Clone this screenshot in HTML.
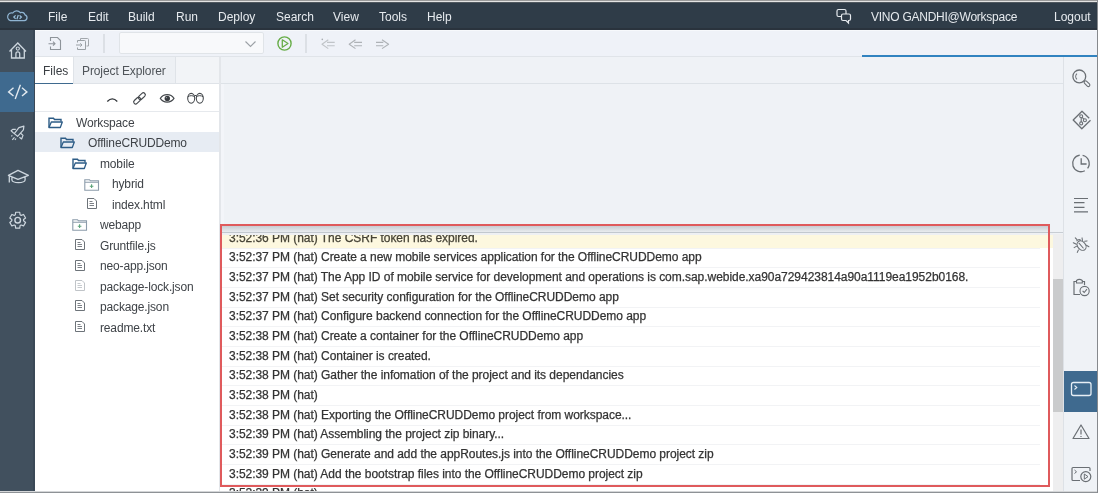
<!DOCTYPE html>
<html><head><meta charset="utf-8">
<style>
*{box-sizing:border-box;margin:0;padding:0}
html,body{width:1098px;height:493px;overflow:hidden;background:#fff;font-family:"Liberation Sans",sans-serif;}
.a{position:absolute}
svg{position:absolute;overflow:visible}
.mi{will-change:transform;top:10px;font-size:12px;color:#e6eaee;white-space:nowrap;line-height:14px}
.tt{will-change:transform;font-size:12px;color:#32363a;white-space:nowrap;line-height:14px}
.ln{will-change:transform;letter-spacing:-0.04px;-webkit-text-stroke:0.25px #333;left:6px;font-size:12px;color:#333;white-space:nowrap;line-height:14px}
</style></head><body>

<div class="a" style="left:0px;top:0px;width:1098px;height:30px;background:#2f3c48;"></div>
<div class="a" style="left:0px;top:28px;width:1098px;height:2px;background:#2a333d;"></div>
<div class="a" style="left:0px;top:0px;width:1098px;height:1px;background:#9a9a9a;"></div>
<div class="a" style="left:0px;top:1px;width:1098px;height:1px;background:#e4e4e4;"></div>
<div class="a" style="left:0px;top:2px;width:1098px;height:1px;background:#50585f;"></div>
<svg style="left:0;top:0" width="36" height="30" viewBox="0 0 36 30">
<path transform="translate(17.5 15.6) scale(0.9) translate(-17.3 -15.5)" d="M9.5 21 H25 A3.3 3.3 0 0 0 25.6 14.6 A3.6 3.6 0 0 0 20.5 12.2 A5.2 5.2 0 0 0 12 12.6 A3.8 3.8 0 0 0 9.5 21 Z" fill="none" stroke="#8fb4d2" stroke-width="1.4"/>
<path d="M15.6 15.4 L13.8 17.1 L15.6 18.8 M19.6 15.4 L21.4 17.1 L19.6 18.8 M18.3 15 L16.9 19.2" fill="none" stroke="#9cc3e0" stroke-width="1.2"/>
</svg>
<div class="a mi" style="left:48px">File</div>
<div class="a mi" style="left:88px">Edit</div>
<div class="a mi" style="left:128px">Build</div>
<div class="a mi" style="left:176px">Run</div>
<div class="a mi" style="left:218px">Deploy</div>
<div class="a mi" style="left:276px">Search</div>
<div class="a mi" style="left:333px">View</div>
<div class="a mi" style="left:379px">Tools</div>
<div class="a mi" style="left:427px">Help</div>
<svg style="left:830px;top:4px" width="30" height="22" viewBox="0 0 30 22">
<path d="M8.5 5.5 H14.5 Q16 5.5 16 7 V11 Q16 12.5 14.5 12.5 H8.5 Q7 12.5 7 11 V7 Q7 5.5 8.5 5.5 Z" fill="none" stroke="#e6eaee" stroke-width="1.2"/>
<path d="M13 10 H19 Q20.5 10 20.5 11.5 V15 Q20.5 16.5 19 16.5 H18.5 V19 L16 16.5 H13 Q11.5 16.5 11.5 15 V11.5 Q11.5 10 13 10 Z" fill="#2f3c48" stroke="#e6eaee" stroke-width="1.2"/>
</svg>
<div class="a mi" style="left:871px;letter-spacing:-0.25px">VINO GANDHI@Workspace</div>
<div class="a mi" style="left:1054px">Logout</div>
<div class="a" style="left:0px;top:30px;width:35px;height:463px;background:#41505e;"></div>
<div class="a" style="left:33px;top:30px;width:2px;height:463px;background:#3a4856;"></div>
<div class="a" style="left:0px;top:72px;width:34px;height:40px;background:#3f6a8f;"></div>
<svg style="left:0;top:30px" width="35" height="200" viewBox="0 30 35 200">
<path d="M9.5 51.5 L17.8 43 L26 51.5 M11.5 50 V58 H24.3 V50 M15.9 58 V53.8 A1.9 1.9 0 0 1 19.7 53.8 V58" fill="none" stroke="#cdd6de" stroke-width="1.3"/>
<circle cx="17.8" cy="48.6" r="1.6" fill="none" stroke="#cdd6de" stroke-width="1.1"/>
<path d="M13.5 87.8 L8.6 91.9 L13.5 96 M22 87.8 L26.9 91.9 L22 96 M20.4 84.8 L15.2 99" fill="none" stroke="#e2e9ef" stroke-width="1.4"/>
<path d="M23.9 126.2 L18.9 127.6 L14.3 133.6 L17.6 136.3 L23.4 129.8 Z M15.8 129.4 H12.7 L11.1 130.7 L13.9 133.4 M20.7 133.2 L23 135.4 L21.6 139 L19.4 137.2 M11.4 136.3 L12.3 135.4 M12.3 139.9 L14.5 137.4 M14.9 139.9 L16 138.5" fill="none" stroke="#cdd6de" stroke-width="1.2" stroke-linejoin="round"/>
<path d="M8.4 175.3 L18 170.3 L28.4 175.3 L18 179.3 Z M11.9 177 V180 C12.5 183.5 24.5 183.5 25.1 180 V177 M9.3 175.6 V182.5" fill="none" stroke="#cdd6de" stroke-width="1.3" stroke-linejoin="round"/>
</svg>
<svg style="left:0;top:0" width="35" height="240" viewBox="0 0 35 240"><path d="M15.29 214.81 L15.67 212.25 L19.73 212.25 L20.11 214.81 L21.16 215.42 L23.57 214.47 L25.59 217.98 L23.57 219.59 L23.57 220.81 L25.59 222.42 L23.57 225.93 L21.16 224.98 L20.11 225.59 L19.73 228.15 L15.67 228.15 L15.29 225.59 L14.24 224.98 L11.83 225.93 L9.81 222.42 L11.83 220.81 L11.83 219.59 L9.81 217.98 L11.83 214.47 L14.24 215.42 Z" fill="none" stroke="#cdd6de" stroke-width="1.2" stroke-linejoin="round"/><circle cx="17.7" cy="220.2" r="2.8" fill="none" stroke="#cdd6de" stroke-width="1.4"/></svg>
<div class="a" style="left:35px;top:30px;width:1063px;height:27px;background:#eff2f8;"></div>
<div class="a" style="left:35px;top:30px;width:1063px;height:1px;background:#f7f9fc;"></div>
<div class="a" style="left:35px;top:56px;width:1063px;height:1px;background:#e0e4e9;"></div>
<svg style="left:0;top:0" width="400" height="60" viewBox="0 0 400 60">
<path d="M50.5 41 V37.5 H57.5 L60.5 40.5 V49.5 H50.5 V46.5" fill="none" stroke="#8e949a" stroke-width="1.1"/>
<path d="M48.5 43.7 H55 M53 41.7 L55 43.7 L53 45.7" fill="none" stroke="#8e949a" stroke-width="1.1"/>
<path d="M80.5 40.5 V38.5 H87.5 Q88.5 38.5 88.5 39.5 V46 H86.5" fill="none" stroke="#a2a7ac" stroke-width="1"/>
<path d="M77.5 42.5 V40.5 H84.5 Q85.5 40.5 85.5 41.5 V49.5 H77.5 V47.5 M76 45 H82 M80.3 43.3 L82 45 L80.3 46.7" fill="none" stroke="#9aa0a5" stroke-width="1"/>
<path d="M104 34 V53" stroke="#c9ced3" stroke-width="1"/>
<path d="M306 34 V53" stroke="#c9ced3" stroke-width="1"/>
<path d="M245.5 41.5 L250.5 46.5 L255.5 41.5" fill="none" stroke="#9ca1a6" stroke-width="1.1"/>
<circle cx="284.5" cy="43.5" r="6.6" fill="none" stroke="#67ad48" stroke-width="1.4"/>
<path d="M282.3 39.8 L288 43.5 L282.3 47.2 Z" fill="none" stroke="#67ad48" stroke-width="1.3" stroke-linejoin="round"/>
<path d="M328.3 39.8 L322 44.2 L328.3 48.6 M327 42.4 H334.7 M327 45.7 H334.7" fill="none" stroke="#c0c4c8" stroke-width="1.1" stroke-linejoin="round"/>
<circle cx="322.3" cy="39.4" r="0.8" fill="#a8adb1"/>
<path d="M355.5 39.8 L349.2 44.2 L355.5 48.6 M354.2 42.4 H362 M354.2 45.7 H362" fill="none" stroke="#aeb2b6" stroke-width="1.1" stroke-linejoin="round"/>
<path d="M382 39.8 L388.6 44.2 L382 48.6 M376 42.4 H383.3 M376 45.7 H383.3" fill="none" stroke="#aeb2b6" stroke-width="1.1" stroke-linejoin="round"/>
</svg>
<div class="a" style="left:119px;top:32px;width:145px;height:22px;background:#f8f9fb;border:1px solid #e0e4e8;border-radius:2px"></div>
<svg style="left:0;top:0" width="300" height="60" viewBox="0 0 300 60"><path d="M245.5 41.5 L250.5 46.5 L255.5 41.5" fill="none" stroke="#9ca1a6" stroke-width="1.1"/></svg>
<div class="a" style="left:220px;top:57px;width:843px;height:436px;background:#eff2f6;"></div>
<div class="a" style="left:220px;top:83px;width:843px;height:1px;background:#dde2e7;"></div>
<div class="a" style="left:862px;top:55px;width:236px;height:2px;background:#3183c0;"></div>
<div class="a" style="left:1063px;top:57px;width:35px;height:436px;background:#eff2f6;"></div>
<div class="a" style="left:1063px;top:57px;width:1px;height:436px;background:#dde1e6;"></div>
<div class="a" style="left:1064px;top:371px;width:34px;height:41px;background:#3f6a8f;"></div>
<svg style="left:0;top:0" width="1098" height="493" viewBox="0 0 1098 493">
<circle cx="1079.3" cy="76.4" r="6.4" fill="none" stroke="#6a6f74" stroke-width="1.3"/>
<rect x="1083.6" y="82.2" width="6.8" height="3" rx="1.5" transform="rotate(45 1087 83.7)" fill="none" stroke="#6a6f74" stroke-width="1.1"/>
<path d="M1076.9 73.6 A4.2 4.2 0 0 0 1076.9 79.4" fill="none" stroke="#6a6f74" stroke-width="1.1"/>
<path d="M1089.2 118.2 L1082 111.2 L1073.2 120 L1081.8 128.7 L1090.5 120.3" fill="none" stroke="#6a6f74" stroke-width="1.3" stroke-linejoin="round"/>
<path d="M1081.2 117.8 V121.9 M1082.1 117.3 L1083.9 119.2" fill="none" stroke="#6a6f74" stroke-width="1.1"/>
<circle cx="1081.2" cy="116.3" r="1.5" fill="none" stroke="#6a6f74" stroke-width="1.1"/>
<circle cx="1081.2" cy="123.4" r="1.5" fill="none" stroke="#6a6f74" stroke-width="1.1"/>
<circle cx="1084.9" cy="120.3" r="1.5" fill="none" stroke="#6a6f74" stroke-width="1.1"/>
<path d="M1082.63 155.28 A8.3 8.3 0 0 1 1087.61 168.28 M1084.80 170.73 A8.3 8.3 0 1 1 1079.74 155.18" fill="none" stroke="#6a6f74" stroke-width="1.3"/>
<path d="M1081.2 158.3 V164 H1086.6" fill="none" stroke="#6a6f74" stroke-width="1.3"/>
<path d="M1074 198.5 H1088 M1074 202.7 H1084.5 M1074 207.3 H1084.5 M1074 211.8 H1088" stroke="#6a6f74" stroke-width="1.2"/>
<g fill="none" stroke="#6a6f74" stroke-width="1.05" stroke-linecap="round">
<ellipse cx="1081.6" cy="245.6" rx="5.2" ry="3.9" transform="rotate(50 1081.6 245.6)"/>
<path d="M1076.8 240.8 A2.6 2.6 0 0 1 1080.6 240.2"/>
<path d="M1079 243.2 L1083.2 248"/>
<path d="M1073.3 242.7 L1076.4 244.2 M1074.1 247.6 L1077.2 245.9 M1077.3 252.4 L1078.4 250 M1082 237.9 L1082.5 240.5 M1084.6 241.2 L1087 240.9 M1086.4 245.2 L1088.9 246.7 M1075.3 237.8 L1077 239.7"/>
</g>
<path d="M1077 281.5 H1074 V294.5 H1080 M1082 281.5 H1084.5 V285" fill="none" stroke="#6a6f74" stroke-width="1.2"/>
<path d="M1076.5 283 V280.5 Q1079.3 278.3 1082.3 280.5 V283 Z" fill="none" stroke="#6a6f74" stroke-width="1.1"/>
<circle cx="1084.6" cy="291" r="4.6" fill="#eff2f6" stroke="#6a6f74" stroke-width="1.1"/>
<path d="M1082.6 290.8 L1084.2 292.5 L1087 289.2" fill="none" stroke="#6a6f74" stroke-width="1.1"/>
<rect x="1071.5" y="382.5" width="19.5" height="13" rx="2" fill="none" stroke="#e6eef5" stroke-width="1.3"/>
<path d="M1074.5 385.5 L1076.8 387.5 L1074.5 389.5" fill="none" stroke="#e6eef5" stroke-width="1.1"/>
<path d="M1081 425 L1089 438.5 H1073 Z" fill="none" stroke="#6a6f74" stroke-width="1.2" stroke-linejoin="round"/>
<path d="M1081 429.5 V434.5 M1081 436 V437" stroke="#6a6f74" stroke-width="1.2"/>
<path d="M1080 480.5 H1073 Q1072 480.5 1072 479.5 V468.5 Q1072 467.5 1073 467.5 H1089 Q1090 467.5 1090 468.5 V471" fill="none" stroke="#6a6f74" stroke-width="1.2"/>
<path d="M1074.5 470 L1076.5 471.8 L1074.5 473.5" fill="none" stroke="#6a6f74" stroke-width="1"/>
<circle cx="1085.8" cy="476.6" r="5" fill="#eff2f6" stroke="#6a6f74" stroke-width="1.2"/>
<path d="M1084.3 474 L1088 476.6 L1084.3 479.2 Z" fill="none" stroke="#6a6f74" stroke-width="1"/>
</svg>
<div class="a" style="left:35px;top:57px;width:185px;height:27px;background:#f2f4f7;"></div>
<div class="a" style="left:35px;top:83px;width:185px;height:1px;background:#dfe3e8;"></div>
<div class="a" style="left:35px;top:57px;width:38px;height:27px;background:#ffffff;"></div>
<div class="a" style="left:35px;top:83px;width:38px;height:2px;background:#3f6a8f;"></div>
<div class="a" style="left:73px;top:57px;width:103px;height:26px;background:#edf0f4;border-left:1px solid #dfe3e8;border-right:1px solid #dfe3e8"></div>
<div class="a tt" style="left:43px;top:64px;color:#3a3e43">Files</div>
<div class="a tt" style="left:82px;top:64px;color:#4f5459;letter-spacing:-0.1px">Project Explorer</div>
<div class="a" style="left:35px;top:84px;width:185px;height:409px;background:#fff;"></div>
<div class="a" style="left:219px;top:57px;width:2px;height:436px;background:#e3e6ea;"></div>
<div class="a" style="left:221px;top:84px;width:3px;height:140px;background:#f3f5f9;"></div>
<div class="a" style="left:35px;top:111px;width:184px;height:1px;background:#e6e9ed;"></div>
<svg style="left:0;top:0" width="220" height="120" viewBox="0 0 220 120">
<path d="M107.3 101.5 Q112.3 96.2 117.3 101.5" fill="none" stroke="#32363a" stroke-width="1.3"/>
<g transform="rotate(-43 139.5 98.4)" fill="none" stroke="#45494d" stroke-width="1.15">
<rect x="132.3" y="96.4" width="8" height="4" rx="2"/>
<rect x="138.7" y="96.4" width="8" height="4" rx="2"/>
</g>
<path d="M160.3 98.4 C163.5 93.4 170.8 93.4 174 98.4 C170.8 103.4 163.5 103.4 160.3 98.4 Z" fill="none" stroke="#45494d" stroke-width="1.1"/>
<circle cx="167.3" cy="98.5" r="2.7" fill="#3a3e42"/>
<circle cx="166.4" cy="97.6" r="0.7" fill="#9a9ea2"/>
<ellipse cx="191.2" cy="98.3" rx="3.5" ry="4.9" fill="none" stroke="#45494d" stroke-width="1.1"/>
<ellipse cx="199.8" cy="98.3" rx="3.5" ry="4.9" fill="none" stroke="#45494d" stroke-width="1.1"/>
<path d="M187.9 96.8 C189.5 95.3 193 95.3 194.6 96.8 M196.4 96.8 C198 95.3 201.5 95.3 203.1 96.8 M194.5 95.5 H196.5" fill="none" stroke="#45494d" stroke-width="1"/>
</svg>
<div class="a" style="left:35px;top:132px;width:184px;height:20px;background:#e7ecf3;"></div>
<div class="a tt" style="left:76px;top:116px;color:#3f4348;letter-spacing:-0.15px">Workspace</div>
<svg style="left:48px;top:117px" width="16" height="12" viewBox="0 0 16 12"><path d="M1 10.5 V1.2 H5.5 L6.5 2.5 H13 V4.5" fill="none" stroke="#2d5c86" stroke-width="1.4"/><path d="M1 10.5 L3.3 5 H14.3 L12.3 10.5 Z" fill="none" stroke="#2d5c86" stroke-width="1.3" stroke-linejoin="round"/></svg>
<div class="a tt" style="left:88px;top:136px;color:#3f4348;letter-spacing:-0.15px">OfflineCRUDDemo</div>
<svg style="left:60px;top:137px" width="16" height="12" viewBox="0 0 16 12"><path d="M1 10.5 V1.2 H5.5 L6.5 2.5 H13 V4.5" fill="none" stroke="#2d5c86" stroke-width="1.4"/><path d="M1 10.5 L3.3 5 H14.3 L12.3 10.5 Z" fill="none" stroke="#2d5c86" stroke-width="1.3" stroke-linejoin="round"/></svg>
<div class="a tt" style="left:100px;top:157px;color:#3f4348;letter-spacing:-0.15px">mobile</div>
<svg style="left:72px;top:158px" width="16" height="12" viewBox="0 0 16 12"><path d="M1 10.5 V1.2 H5.5 L6.5 2.5 H13 V4.5" fill="none" stroke="#2d5c86" stroke-width="1.4"/><path d="M1 10.5 L3.3 5 H14.3 L12.3 10.5 Z" fill="none" stroke="#2d5c86" stroke-width="1.3" stroke-linejoin="round"/></svg>
<div class="a tt" style="left:112px;top:177px;color:#3f4348;letter-spacing:-0.15px">hybrid</div>
<svg style="left:84px;top:179px" width="16" height="13" viewBox="0 0 16 13"><path d="M0.8 11.2 V0.8 H5.5 L6.5 1.8 H14.5 V11.2 Z M0.8 3.3 H14.5" fill="none" stroke="#8c9cab" stroke-width="1.1"/><path d="M7.6 5.3 V9 M5.8 7.2 H9.4" stroke="#5aa278" stroke-width="1.1"/></svg>
<div class="a tt" style="left:112px;top:198px;color:#3f4348;letter-spacing:-0.15px">index.html</div>
<svg style="left:87px;top:198px" width="11" height="12" viewBox="0 0 11 12"><path d="M0.5 0.5 H7 L9.5 3 V10.5 H0.5 Z" fill="none" stroke="#6d7379" stroke-width="1"/><path d="M2.5 3.5 H5.5 M2.5 5.5 H7 M2.5 7.5 H7" stroke="#6d7379" stroke-width="0.9"/></svg>
<div class="a tt" style="left:100px;top:218px;color:#3f4348;letter-spacing:-0.15px">webapp</div>
<svg style="left:72px;top:219px" width="16" height="13" viewBox="0 0 16 13"><path d="M0.8 11.2 V0.8 H5.5 L6.5 1.8 H14.5 V11.2 Z M0.8 3.3 H14.5" fill="none" stroke="#8c9cab" stroke-width="1.1"/><path d="M7.6 5.3 V9 M5.8 7.2 H9.4" stroke="#5aa278" stroke-width="1.1"/></svg>
<div class="a tt" style="left:100px;top:239px;color:#3f4348;letter-spacing:-0.15px">Gruntfile.js</div>
<svg style="left:75px;top:239px" width="11" height="12" viewBox="0 0 11 12"><path d="M0.5 0.5 H7 L9.5 3 V10.5 H0.5 Z" fill="none" stroke="#6d7379" stroke-width="1"/><path d="M2.5 3.5 H5.5 M2.5 5.5 H7 M2.5 7.5 H7" stroke="#6d7379" stroke-width="0.9"/></svg>
<div class="a tt" style="left:100px;top:259px;color:#3f4348;letter-spacing:-0.15px">neo-app.json</div>
<svg style="left:75px;top:260px" width="11" height="12" viewBox="0 0 11 12"><path d="M0.5 0.5 H7 L9.5 3 V10.5 H0.5 Z" fill="none" stroke="#6d7379" stroke-width="1"/><path d="M2.5 3.5 H5.5 M2.5 5.5 H7 M2.5 7.5 H7" stroke="#6d7379" stroke-width="0.9"/></svg>
<div class="a tt" style="left:100px;top:280px;color:#3f4348;letter-spacing:-0.15px">package-lock.json</div>
<svg style="left:75px;top:280px" width="11" height="12" viewBox="0 0 11 12"><path d="M0.5 0.5 H7 L9.5 3 V10.5 H0.5 Z" fill="none" stroke="#c0c4c8" stroke-width="1"/><path d="M2.5 3.5 H5.5 M2.5 5.5 H7 M2.5 7.5 H7" stroke="#c0c4c8" stroke-width="0.9"/></svg>
<div class="a tt" style="left:100px;top:300px;color:#3f4348;letter-spacing:-0.15px">package.json</div>
<svg style="left:75px;top:300px" width="11" height="12" viewBox="0 0 11 12"><path d="M0.5 0.5 H7 L9.5 3 V10.5 H0.5 Z" fill="none" stroke="#6d7379" stroke-width="1"/><path d="M2.5 3.5 H5.5 M2.5 5.5 H7 M2.5 7.5 H7" stroke="#6d7379" stroke-width="0.9"/></svg>
<div class="a tt" style="left:100px;top:321px;color:#3f4348;letter-spacing:-0.15px">readme.txt</div>
<svg style="left:75px;top:321px" width="11" height="12" viewBox="0 0 11 12"><path d="M0.5 0.5 H7 L9.5 3 V10.5 H0.5 Z" fill="none" stroke="#6d7379" stroke-width="1"/><path d="M2.5 3.5 H5.5 M2.5 5.5 H7 M2.5 7.5 H7" stroke="#6d7379" stroke-width="0.9"/></svg>
<div class="a" style="left:220px;top:232px;width:833px;height:261px;background:#fff;overflow:hidden">
<div class="a" style="left:0;top:0;width:833px;height:16px;background:#fdf8df"></div>
<div class="a ln" style="left:8.599999999999994px;top:-1px;color:#4d4935">3:52:36 PM (hat) The CSRF token has expired.</div>
<div class="a" style="left:0;top:16px;width:820px;height:1px;background:#f2f3f5"></div>
<div class="a ln" style="left:8.599999999999994px;top:18px;color:#333">3:52:37 PM (hat) Create a new mobile services application for the OfflineCRUDDemo app</div>
<div class="a" style="left:0;top:35px;width:820px;height:1px;background:#f2f3f5"></div>
<div class="a ln" style="left:8.599999999999994px;top:38px;color:#333">3:52:37 PM (hat) The App ID of mobile service for development and operations is com.sap.webide.xa90a729423814a90a1119ea1952b0168.</div>
<div class="a" style="left:0;top:55px;width:820px;height:1px;background:#f2f3f5"></div>
<div class="a ln" style="left:8.599999999999994px;top:58px;color:#333">3:52:37 PM (hat) Set security configuration for the OfflineCRUDDemo app</div>
<div class="a" style="left:0;top:75px;width:820px;height:1px;background:#f2f3f5"></div>
<div class="a ln" style="left:8.599999999999994px;top:77px;color:#333">3:52:37 PM (hat) Configure backend connection for the OfflineCRUDDemo app</div>
<div class="a" style="left:0;top:94px;width:820px;height:1px;background:#f2f3f5"></div>
<div class="a ln" style="left:8.599999999999994px;top:97px;color:#333">3:52:38 PM (hat) Create a container for the OfflineCRUDDemo app</div>
<div class="a" style="left:0;top:114px;width:820px;height:1px;background:#f2f3f5"></div>
<div class="a ln" style="left:8.599999999999994px;top:117px;color:#333">3:52:38 PM (hat) Container is created.</div>
<div class="a" style="left:0;top:134px;width:820px;height:1px;background:#f2f3f5"></div>
<div class="a ln" style="left:8.599999999999994px;top:136px;color:#333">3:52:38 PM (hat) Gather the infomation of the project and its dependancies</div>
<div class="a" style="left:0;top:153px;width:820px;height:1px;background:#f2f3f5"></div>
<div class="a ln" style="left:8.599999999999994px;top:156px;color:#333">3:52:38 PM (hat)</div>
<div class="a" style="left:0;top:173px;width:820px;height:1px;background:#f2f3f5"></div>
<div class="a ln" style="left:8.599999999999994px;top:176px;color:#333">3:52:38 PM (hat) Exporting the OfflineCRUDDemo project from workspace...</div>
<div class="a" style="left:0;top:193px;width:820px;height:1px;background:#f2f3f5"></div>
<div class="a ln" style="left:8.599999999999994px;top:195px;color:#333">3:52:39 PM (hat) Assembling the project zip binary...</div>
<div class="a" style="left:0;top:212px;width:820px;height:1px;background:#f2f3f5"></div>
<div class="a ln" style="left:8.599999999999994px;top:215px;color:#333">3:52:39 PM (hat) Generate and add the appRoutes.js into the OfflineCRUDDemo project zip</div>
<div class="a" style="left:0;top:232px;width:820px;height:1px;background:#f2f3f5"></div>
<div class="a ln" style="left:8.599999999999994px;top:235px;color:#333">3:52:39 PM (hat) Add the bootstrap files into the OfflineCRUDDemo project zip</div>
<div class="a" style="left:0;top:252px;width:820px;height:1px;background:#f2f3f5"></div>
<div class="a ln" style="left:8.599999999999994px;top:254px;color:#333">3:52:39 PM (hat)</div>
<div class="a" style="left:0;top:0;width:833px;height:1px;background:#c2c8ce"></div>
<div class="a" style="left:0;top:1px;width:833px;height:2px;background:#eef0f3"></div>
</div>
<div class="a" style="left:222px;top:226px;width:826px;height:6px;background:linear-gradient(#c8cdd3,#e9ecef)"></div>
<div class="a" style="left:1048px;top:232px;width:15px;height:1px;background:#c8cdd3;"></div>
<div class="a" style="left:1053px;top:234px;width:10px;height:259px;background:#eeeeef;"></div>
<div class="a" style="left:1053px;top:279px;width:10px;height:133px;background:#cacbcc;"></div>
<div class="a" style="left:220px;top:224px;width:830px;height:263px;background:transparent;border:2px solid #df5a5c"></div>
<div class="a" style="left:0px;top:492px;width:1098px;height:1px;background:#8e9296;"></div>
<div class="a" style="left:0px;top:491px;width:1098px;height:1px;background:#d4d6d8;"></div>
<div class="a" style="left:1097px;top:0px;width:1px;height:493px;background:#86898d;"></div>
</body></html>
